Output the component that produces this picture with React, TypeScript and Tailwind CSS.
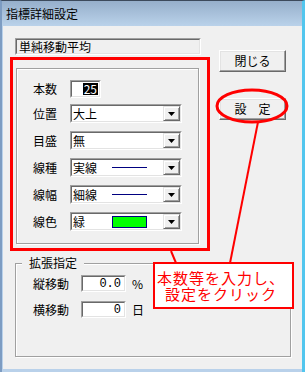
import type { ReactNode } from "react";

const jp = "font-['MS_UI_Gothic','Noto_Sans_CJK_JP',sans-serif]";

function Sunken({ className = "", inner = "bg-white", children }: { className?: string; inner?: string; children?: ReactNode }) {
  return (
    <div className={`border border-t-[#a0a0a0] border-l-[#a0a0a0] border-b-white border-r-white ${className}`}>
      <div className={`h-full w-full border border-t-[#696969] border-l-[#696969] border-b-[#e3e3e3] border-r-[#e3e3e3] ${inner}`}>
        {children}
      </div>
    </div>
  );
}

function DropButton() {
  return (
    <div className="ml-auto h-full w-[17px] border border-t-[#e3e3e3] border-l-[#e3e3e3] border-b-[#696969] border-r-[#696969] bg-[#f0f0f0] flex items-center justify-center shadow-[inset_1px_1px_0_white,inset_-1px_-1px_0_#a0a0a0]">
      <svg width="7" height="4" viewBox="0 0 7 4">
        <path d="M0 0h7L3.5 4z" fill="#000" />
      </svg>
    </div>
  );
}

function Select({ value, sample }: { value: string; sample?: "line" | "green" }) {
  return (
    <Sunken className="w-[112px] h-[19px]">
      <div className="flex h-full items-center">
        <span className="pl-[1px] w-[40px] text-[12px] leading-none text-black">{value}</span>
        {sample === "line" && <span className="block w-[35px] h-px bg-[#000080]" />}
        {sample === "green" && <span className="block w-[35px] h-[12px] border border-[#000080] bg-[#00ff00]" />}
        <DropButton />
      </div>
    </Sunken>
  );
}

function Button({ label }: { label: string }) {
  return (
    <div className="w-[67px] h-[22px] border border-t-white border-l-white border-b-[#696969] border-r-[#696969] bg-[#f0f0f0] shadow-[inset_-1px_-1px_0_#a0a0a0,inset_1px_1px_0_#e3e3e3] flex items-center justify-center text-[12px] text-black">
      {label}
    </div>
  );
}

const rows: { label: string; value: string; sample?: "line" | "green" }[] = [
  { label: "位置", value: "大上" },
  { label: "目盛", value: "無" },
  { label: "線種", value: "実線", sample: "line" },
  { label: "線幅", value: "細線", sample: "line" },
  { label: "線色", value: "緑", sample: "green" },
];

export default function App() {
  return (
    <div className={`relative w-[305px] h-[372px] overflow-hidden bg-[#b9d1ea] border-l-[2px] border-l-[#7d9cc2] border-r-[3px] border-r-[#52c6ee] border-t border-t-[#3c4a5c] ${jp}`}>
      {/* title bar */}
      <div className="h-[25px] bg-gradient-to-b from-[#96afcb] to-[#bad2ea] flex items-center pl-[4px] text-[12px] text-black">
        指標詳細設定
      </div>

      {/* client */}
      <div className="ml-[1px] h-[343px] bg-[#f0f0f0] pt-[12px] pl-[7px]">
        <div className="flex">
          <div className="flex flex-col">
            <Sunken className="ml-[5px] w-[186px] h-[17px]" inner="bg-[#f0f0f0]">
              <div className="h-full flex items-center pl-[2px] text-[12px] text-black leading-none">単純移動平均</div>
            </Sunken>
            <div className="mt-[2px] w-[200px] h-[194px] border-[3px] border-[#ff0000] pt-[8px] pl-[3px]">
              <div className="w-[183px] h-[176px] border border-[#a0a0a0] shadow-[inset_1px_1px_0_white,1px_1px_0_white] pt-[11px] pl-[16px] text-[12px] text-black">
                <div className="flex items-center h-[18px]">
                  <span className="w-[37px]">本数</span>
                  <Sunken className="w-[31px] h-[18px]">
                    <div className="h-full flex items-center justify-end pr-[1px]">
                      <span className="bg-black text-white leading-[12px] px-px">25</span>
                    </div>
                  </Sunken>
                </div>
                <div className="flex flex-col gap-[8px] mt-[6px]">
                  {rows.map((r) => (
                    <div key={r.label} className="flex items-center h-[19px]">
                      <span className="w-[37px]">{r.label}</span>
                      <Select value={r.value} sample={r.sample} />
                    </div>
                  ))}
                </div>
              </div>
            </div>
          </div>
          <div className="ml-[9px] pt-[12px] flex flex-col gap-[26px]">
            <Button label="閉じる" />
            <Button label="設　定" />
          </div>
        </div>

        {/* 拡張指定 */}
        <fieldset className="mt-[5px] ml-[5px] w-[276px] h-[101px] border border-[#a0a0a0] shadow-[inset_1px_1px_0_white,1px_1px_0_white] text-[12px] text-black">
          <legend className="ml-[6px] px-[7px] bg-[#f0f0f0] leading-[14px]">拡張指定</legend>
          <div className="pl-[17px] pt-[5px] flex flex-col gap-[9px]">
            <div className="flex items-center h-[17px]">
              <span className="w-[48px]">縦移動</span>
              <Sunken className="w-[45px] h-[17px]">
                <div className="h-full flex items-center justify-end pr-[3px] leading-none font-['Liberation_Mono',monospace] text-[12px]">0.0</div>
              </Sunken>
              <span className="ml-[6px]">%</span>
            </div>
            <div className="flex items-center h-[17px]">
              <span className="w-[48px]">横移動</span>
              <Sunken className="w-[45px] h-[17px]">
                <div className="h-full flex items-center justify-end pr-[3px] leading-none font-['Liberation_Mono',monospace] text-[12px]">0</div>
              </Sunken>
              <span className="ml-[6px]">日</span>
            </div>
          </div>
        </fieldset>
      </div>

      {/* annotation overlay */}
      <svg className="absolute left-[-2px] top-[-1px] pointer-events-none" width="305" height="372" viewBox="0 0 305 372">
        <ellipse cx="252" cy="106" rx="35" ry="16" fill="none" stroke="#ff0000" strokeWidth="3" />
        <line x1="258" y1="122" x2="230" y2="263" stroke="#ff0000" strokeWidth="2" />
        <line x1="171" y1="251" x2="176" y2="263" stroke="#ff0000" strokeWidth="2" />
      </svg>
      <div className="absolute left-[151px] top-[261px] w-[141px] h-[47px] border-2 border-[#ff0000] bg-white pt-[6px] pr-[5px] text-center text-[15px] leading-[16px] tracking-[1px] text-[#ff0000] whitespace-nowrap">
        本数等を入力し、
        <br />
        設定をクリック
      </div>
    </div>
  );
}
